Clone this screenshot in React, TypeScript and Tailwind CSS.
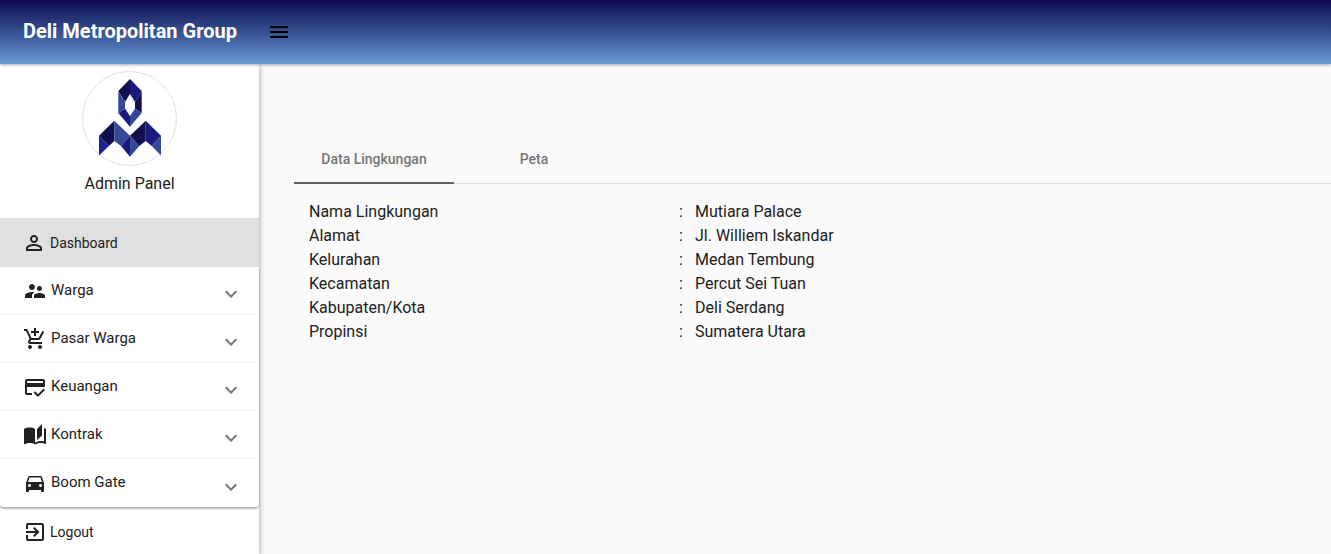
import React from "react";
import {
  MdAddShoppingCart,
  MdAutoStories,
  MdDirectionsCar,
  MdExitToApp,
  MdExpandMore,
  MdMenu,
  MdOutlineCreditScore,
  MdPersonOutline,
  MdSupervisorAccount,
} from "react-icons/md";

const Logo = () => (
  <svg viewBox="0 0 70 85" className="w-[70px] h-[85px] -mt-[2px] ml-px">
    <polygon points="35,4 23.3,16 30,27 35,19" fill="#12104f" />
    <polygon points="35,4 46.7,16 40,27 35,19" fill="#1a1a7e" />
    <polygon points="23.3,16 30,27 30,33.5 23.3,38" fill="#34489a" />
    <polygon points="46.7,16 40,27 40,33.5 46.7,38" fill="#12104f" />
    <polygon points="23.3,38 30,33.5 35,41 35,51.7" fill="#1a1a7e" />
    <polygon points="46.7,38 40,33.5 35,41 35,51.7" fill="#34489a" />
    <polygon points="4,60.7 19.3,45.7 19.3,66 14,71" fill="#12104f" />
    <polygon points="4,60.7 14,71 4,80.5" fill="#1d2390" />
    <polygon points="19.3,45.7 35,60.7 26,71 19.3,66" fill="#34489a" />
    <polygon points="35,60.7 26,71 35,81.7" fill="#1a1a7e" />
    <polygon points="35,60.7 44.3,71 35,81.7" fill="#34489a" />
    <polygon points="35,60.7 50.7,45.7 50.7,66 44.3,71" fill="#12104f" />
    <polygon points="50.7,45.7 66,60.7 56.7,71 50.7,66" fill="#1a1a7e" />
    <polygon points="66,60.7 56.7,71 66,80.5" fill="#34489a" />
  </svg>
);

const Sidebar = () => {
  const items = [
    { icon: <MdSupervisorAccount size={24} />, label: "Warga" },
    { icon: <MdAddShoppingCart size={24} />, label: "Pasar Warga" },
    { icon: <MdOutlineCreditScore size={24} />, label: "Keuangan" },
    { icon: <MdAutoStories size={24} />, label: "Kontrak" },
    { icon: <MdDirectionsCar size={24} />, label: "Boom Gate" },
  ];

  return (
    <aside className="w-[259px] shrink-0 bg-white shadow-[0_2px_6px_rgba(0,0,0,0.4)] z-10 flex flex-col text-[#212121]">
      <div className="h-[154px] shrink-0 flex flex-col items-center pt-[7px]">
        <div className="size-[95px] rounded-full border border-[#e0e0e0] flex items-center justify-center">
          <Logo />
        </div>
        <div className="mt-[6px] text-base leading-6">Admin Panel</div>
      </div>
      <div className="h-[49px] shrink-0 bg-[#e0e0e0] flex items-center pl-[22px] gap-[4px] text-sm">
        <MdPersonOutline size={24} />
        <span className="mt-px">Dashboard</span>
      </div>
      <div className="shrink-0 rounded-b shadow-[0_2px_2px_rgba(0,0,0,0.3)]">
        {items.map((item, index) => (
          <div
            key={index}
            className="h-[48px] flex items-center pl-[23px] pr-[16px] gap-[4px] text-[15px] border-b border-[#f2f2f2] last:border-b-0"
          >
            {item.icon}
            <span className="flex-1 -mt-px">{item.label}</span>
            <MdExpandMore size={24} className="text-[#757575] mt-[7px]" />
          </div>
        ))}
      </div>
      <div className="h-[48px] shrink-0 flex items-center pl-[23px] gap-[3px] text-sm mt-px">
        <MdExitToApp size={24} />
        <span>Logout</span>
      </div>
    </aside>
  );
};

const App = () => {
  const rows = [
    ["Nama Lingkungan", "Mutiara Palace"],
    ["Alamat", "Jl. Williem Iskandar"],
    ["Kelurahan", "Medan Tembung"],
    ["Kecamatan", "Percut Sei Tuan"],
    ["Kabupaten/Kota", "Deli Serdang"],
    ["Propinsi", "Sumatera Utara"],
  ];

  return (
    <div className="h-screen overflow-hidden flex flex-col bg-[#fafafa] font-['Roboto',sans-serif]">
      <header className="h-[64px] shrink-0 z-20 flex items-center bg-gradient-to-b from-[#0f0a4f] to-[#6b98d6] shadow-[0_1px_3px_rgba(0,0,0,0.35)] pl-[23px]">
        <h1 className="text-xl leading-6 font-bold text-white w-[244px] -mt-[2px]">Deli Metropolitan Group</h1>
        <MdMenu size={24} className="text-black" />
      </header>
      <div className="flex flex-1 min-h-0">
        <Sidebar />
        <main className="flex-1 pl-[35px] pt-[72px] text-[#212121]">
          <div className="flex h-[48px] border-b border-[#e0e0e0]">
            <div className="w-[160px] h-[48px] flex items-center justify-center border-b-2 border-[#616161] text-sm font-medium text-[#757575]">
              Data Lingkungan
            </div>
            <div className="w-[160px] h-[46px] flex items-center justify-center text-sm font-medium text-[#757575]">
              Peta
            </div>
          </div>
          <div className="pl-[15px] pt-[16px] text-base leading-6">
            {rows.map(([label, value], index) => (
              <div key={index} className="flex">
                <span className="w-[370px]">{label}</span>
                <span className="w-[16px]">:</span>
                <span>{value}</span>
              </div>
            ))}
          </div>
        </main>
      </div>
    </div>
  );
};

export default App;
